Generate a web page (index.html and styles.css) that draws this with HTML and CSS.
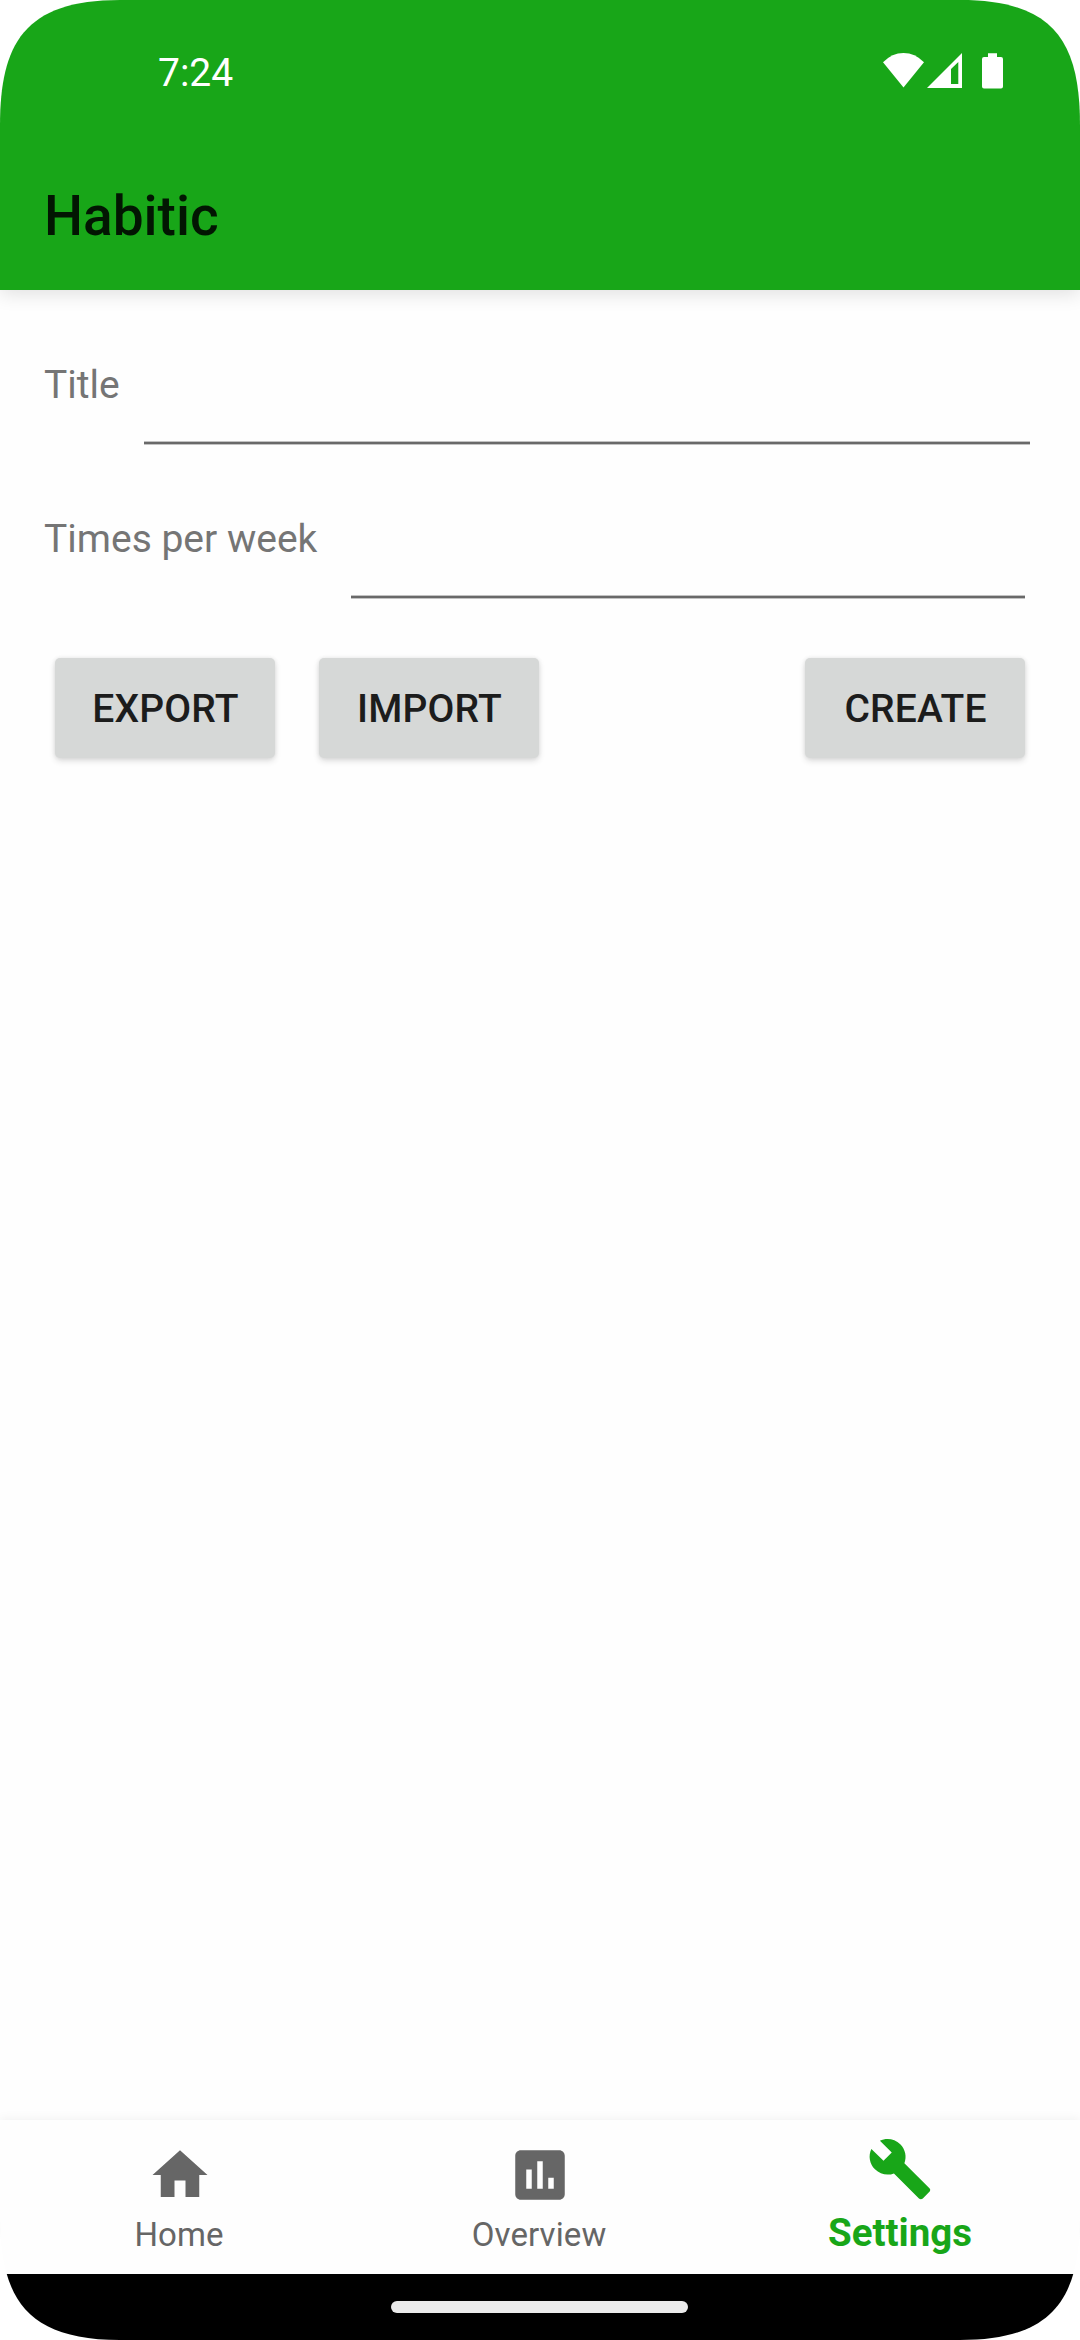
FILE: index.html
```html
<!DOCTYPE html>
<html lang="en">
<head>
<meta charset="utf-8">
<title>Habitic</title>
<link rel="stylesheet" href="styles.css">
</head>
<body>
<div class="screen">
  <header class="app-header">
    <div class="status-bar">
      <span class="clock">7:24</span>
      <svg class="status-icons" width="120" height="36" viewBox="883 53 120 36" fill="#fff" aria-hidden="true">
        <path d="M883 62.3Q892 53 903.500 53T924 62.300L903.500 87.500Z"/>
        <path fill-rule="evenodd" d="M962 53V88H927ZM958.300 62L951 69V84H958.300Z"/>
        <path d="M988 53.300h9V57h4q2 0 2 2v27.500q0 2-2 2h-17q-2 0-2-2V59q0-2 2-2h4Z"/>
      </svg>
    </div>
    <h1 class="app-title">Habitic</h1>
  </header>

  <main class="content">
    <label class="field field-title"><span class="label">Title</span><input class="input" type="text"></label>
    <label class="field field-times"><span class="label">Times per week</span><input class="input" type="text"></label>
    <div class="actions">
      <button class="button">EXPORT</button>
      <button class="button">IMPORT</button>
      <button class="button button-create">CREATE</button>
    </div>
  </main>

  <nav class="bottom-nav">
    <a class="nav-item">
      <svg class="nav-icon" viewBox="0 0 24 24"><path d="M10 20v-6h4v6h5v-8h3L12 3 2 12h3v8z"/></svg>
      <span class="nav-label">Home</span>
    </a>
    <a class="nav-item">
      <svg class="nav-icon" viewBox="0 0 24 24"><path d="M19 3H5c-1.100 0-2 .9-2 2v14c0 1.100.9 2 2 2h14c1.100 0 2-.9 2-2V5c0-1.100-.9-2-2-2zM9 17H7v-7h2v7zm4 0h-2V7h2v10zm4 0h-2v-4h2v4z"/></svg>
      <span class="nav-label">Overview</span>
    </a>
    <a class="nav-item active">
      <svg class="nav-icon" viewBox="0 0 24 24"><path d="M22.700 19l-9.100-9.100c.9-2.300.4-5-1.500-6.900-2-2-5-2.400-7.400-1.300L9 6 6 9 1.600 4.700C.4 7.100.9 10.100 2.900 12.100c1.900 1.900 4.600 2.400 6.900 1.500l9.100 9.100c.4.4 1 .4 1.400 0l2.300-2.300c.5-.4.5-1.100.1-1.400z"/></svg>
      <span class="nav-label">Settings</span>
    </a>
  </nav>
  <div class="gesture-bar"><div class="handle"></div></div>
</div>
</body>
</html>
```
FILE: styles.css
```css
* { box-sizing: border-box; }

body {
  margin: 0;
  background: #fff;
  font-family: Roboto, sans-serif;
}

.screen {
  width: 1080px;
  height: 2340px;
  display: flex;
  flex-direction: column;
  background: #fefefe;
  clip-path: path("M0 126C0 44 24 0 120 0H960C1056 0 1080 44 1080 126V2214C1080 2296 1056 2340 960 2340H120C24 2340 0 2296 0 2214Z");
}

.app-header {
  height: 290px;
  background: #18a618;
  box-shadow: 0 4px 18px rgba(0, 0, 0, 0.12);
}

.status-bar {
  height: 143px;
  padding: 49px 77px 0 158px;
  display: flex;
  justify-content: space-between;
  align-items: flex-start;
}

.clock {
  color: #fff;
  font-size: 39px;
  line-height: 48px;
}

.status-icons { margin-top: 4px; }

.app-title {
  margin: 0;
  padding-left: 44px;
  font-size: 55px;
  line-height: 147px;
  font-weight: 500;
  color: #021602;
}

.content {
  flex: 1;
  padding: 44px 55px 0 44px;
}

.field {
  display: flex;
  align-items: flex-start;
  height: 154px;
}

.field-title { margin-right: -5px; }

.label {
  font-size: 39px;
  line-height: 46px;
  padding-top: 28px;
  color: #757575;
  white-space: nowrap;
}

.field-title .label { width: 100px; }
.field-times .label { width: 307px; }

.input {
  flex: 1;
  min-width: 0;
  height: 111px;
  padding: 0 0 10px;
  border: 0;
  border-radius: 0;
  outline: 0;
  background: linear-gradient(#c2c2c2 0 1px, #696969 1px 3px, #c2c2c2 3px) bottom / 100% 4px no-repeat;
  font: 49.500px Roboto, sans-serif;
}

.actions {
  display: flex;
  gap: 44px;
  margin: 16px 0 0 11px;
}

.button {
  width: 220px;
  height: 100px;
  padding: 3px 0 0 1px;
  border: 0;
  border-radius: 5px;
  background: #d6d8d7;
  color: #1c1c1c;
  font: 500 39px/97px Roboto, sans-serif;
  letter-spacing: 0.150px;
  box-shadow: 0 3px 6px rgba(0, 0, 0, 0.13), 0 0 4px rgba(0, 0, 0, 0.08);
}

.button-create { margin-left: auto; }

.bottom-nav {
  height: 154px;
  display: grid;
  grid-template-columns: repeat(3, 1fr);
  background: #fefefe;
  box-shadow: 0 -1px 10px rgba(0, 0, 0, 0.06);
}

.nav-item {
  display: flex;
  flex-direction: column;
  align-items: center;
  padding-top: 22px;
  color: #666;
}

.nav-icon {
  width: 66px;
  height: 66px;
  fill: currentColor;
}

.nav-label {
  margin: 7px 2px 0 0;
  font-size: 33px;
  line-height: 40px;
  letter-spacing: 0.100px;
}

.active {
  padding-top: 16px;
  color: #18a618;
}

.active .nav-label {
  margin: 8px 0 0;
  font-size: 38.500px;
  line-height: 46px;
  font-weight: 700;
  letter-spacing: 0;
}

.gesture-bar {
  height: 66px;
  padding: 27px 0 0 391px;
  background: #000;
}

.handle {
  width: 297px;
  height: 12px;
  border-radius: 6px;
  background: #ebebeb;
}
```
